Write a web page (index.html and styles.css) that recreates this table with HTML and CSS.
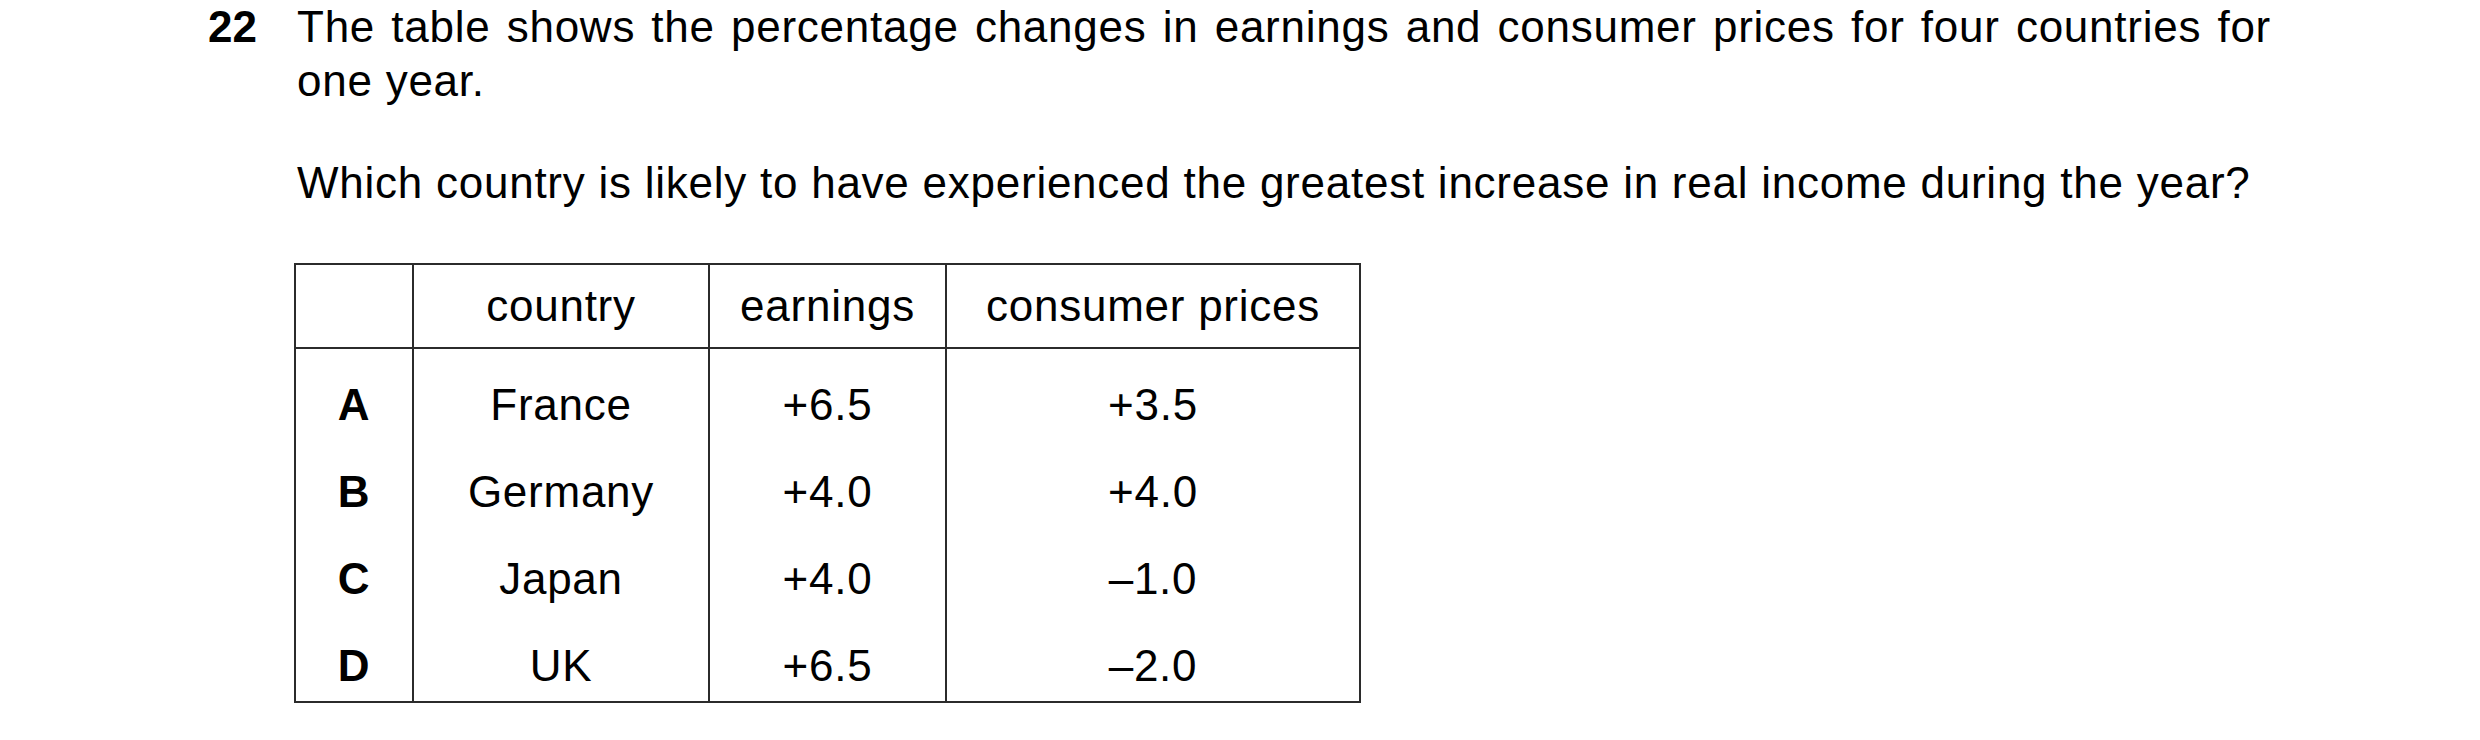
FILE: index.html
```html
<!DOCTYPE html>
<html lang="en">
<head>
<meta charset="utf-8">
<title>Question 22</title>
<link rel="stylesheet" href="styles.css">
</head>
<body>
<div class="question">
  <div class="qnum">22</div>
  <div class="qbody">
    <p class="stem">The table shows the percentage changes in earnings and consumer prices for four countries for one year.</p>
    <p class="ask">Which country is likely to have experienced the greatest increase in real income during the year?</p>
    <table class="data">
      <colgroup>
        <col class="c-key">
        <col class="c-country">
        <col class="c-earn">
        <col class="c-price">
      </colgroup>
      <thead>
        <tr>
          <th></th>
          <th>country</th>
          <th>earnings</th>
          <th>consumer prices</th>
        </tr>
      </thead>
      <tbody>
        <tr><td class="key">A</td><td>France</td><td>+6.5</td><td>+3.5</td></tr>
        <tr><td class="key">B</td><td>Germany</td><td>+4.0</td><td>+4.0</td></tr>
        <tr><td class="key">C</td><td>Japan</td><td>+4.0</td><td>&#8211;1.0</td></tr>
        <tr class="last"><td class="key">D</td><td>UK</td><td>+6.5</td><td>&#8211;2.0</td></tr>
      </tbody>
    </table>
  </div>
</div>
</body>
</html>
```
FILE: styles.css
```css
html, body {
  margin: 0;
  padding: 0;
  background: #ffffff;
}

body {
  font-family: "Liberation Sans", Arial, sans-serif;
  font-size: 44px;
  line-height: 54px;
  letter-spacing: 0.75px;
  color: #000000;
}

.question {
  display: flex;
  padding-left: 208px;
}

.qnum {
  width: 89px;
  font-weight: bold;
  letter-spacing: 0;
  flex: none;
}

.qbody {
  width: 1974px;
}

.stem {
  margin: 0;
  text-align: justify;
}

.ask {
  margin: 48px 0 0 0;
}

.data {
  margin: 53px 0 0 -3px;
  border-collapse: collapse;
  table-layout: fixed;
  width: 1065px;
  border: 2px solid #2b2b2b;
}

.c-key { width: 118px; }
.c-country { width: 296px; }
.c-earn { width: 237px; }
.c-price { width: 414px; }

.data th {
  font-weight: normal;
  height: 82px;
  padding: 0;
  line-height: 82px;
  text-align: center;
  border: 2px solid #2b2b2b;
}

.data td {
  padding: 24px 0 0 0;
  line-height: 63px;
  text-align: center;
  border-left: 2px solid #2b2b2b;
  border-right: 2px solid #2b2b2b;
}

.data tr.last td {
  padding-bottom: 4px;
}

.data td.key {
  font-weight: bold;
}
```
